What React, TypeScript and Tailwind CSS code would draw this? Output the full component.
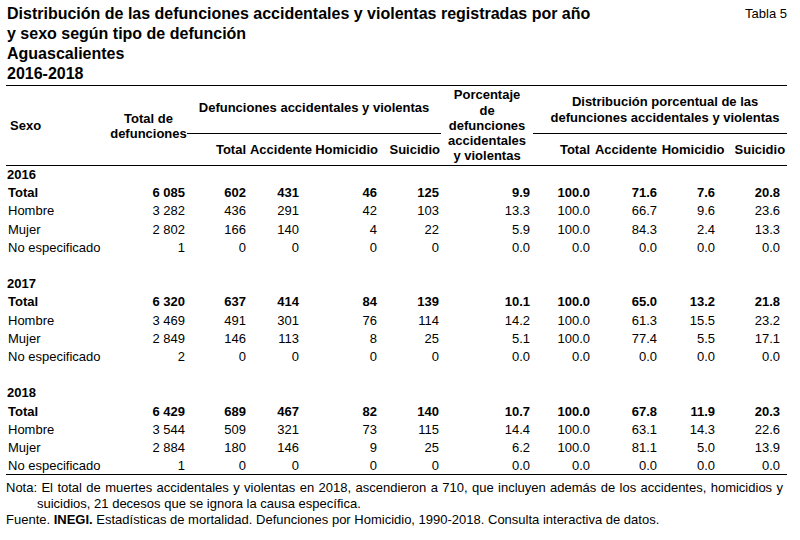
const rows: { year: string; data: [string, string[]][] }[] = [
  {
    year: "2016",
    data: [
      ["Total", ["6 085", "602", "431", "46", "125", "9.9", "100.0", "71.6", "7.6", "20.8"]],
      ["Hombre", ["3 282", "436", "291", "42", "103", "13.3", "100.0", "66.7", "9.6", "23.6"]],
      ["Mujer", ["2 802", "166", "140", "4", "22", "5.9", "100.0", "84.3", "2.4", "13.3"]],
      ["No especificado", ["1", "0", "0", "0", "0", "0.0", "0.0", "0.0", "0.0", "0.0"]],
    ],
  },
  {
    year: "2017",
    data: [
      ["Total", ["6 320", "637", "414", "84", "139", "10.1", "100.0", "65.0", "13.2", "21.8"]],
      ["Hombre", ["3 469", "491", "301", "76", "114", "14.2", "100.0", "61.3", "15.5", "23.2"]],
      ["Mujer", ["2 849", "146", "113", "8", "25", "5.1", "100.0", "77.4", "5.5", "17.1"]],
      ["No especificado", ["2", "0", "0", "0", "0", "0.0", "0.0", "0.0", "0.0", "0.0"]],
    ],
  },
  {
    year: "2018",
    data: [
      ["Total", ["6 429", "689", "467", "82", "140", "10.7", "100.0", "67.8", "11.9", "20.3"]],
      ["Hombre", ["3 544", "509", "321", "73", "115", "14.4", "100.0", "63.1", "14.3", "22.6"]],
      ["Mujer", ["2 884", "180", "146", "9", "25", "6.2", "100.0", "81.1", "5.0", "13.9"]],
      ["No especificado", ["1", "0", "0", "0", "0", "0.0", "0.0", "0.0", "0.0", "0.0"]],
    ],
  },
]

// padding-right per value column, to line numbers up under the headers
const valuePad = ["pr-[2px]", "pr-[1px]", "pr-[16px]", "pr-[2px]", "pr-[2px]", "pr-[3px]", "pr-[2px]", "pr-[2px]", "pr-[12px]", "pr-[7px]"]

function YearBlock({ year, data, last }: { year: string; data: [string, string[]][]; last: boolean }) {
  return (
    <>
      <tr className="h-[18.2px]">
        <td className="pl-[1px] font-bold" colSpan={11}>
          {year}
        </td>
      </tr>
      {data.map(([label, values]) => (
        <tr key={label} className={`h-[18.2px] ${label === "Total" ? "font-bold" : ""}`}>
          <td className="pl-[2px] whitespace-nowrap">{label}</td>
          {values.map((v, i) => (
            <td key={i} className={`text-right ${valuePad[i]}`}>
              {v}
            </td>
          ))}
        </tr>
      ))}
      {!last && (
        <tr className="h-[18.2px]">
          <td colSpan={11}></td>
        </tr>
      )}
    </>
  )
}

export default function App() {
  return (
    <div className="w-[800px] h-[540px] bg-white text-black font-['Liberation_Sans',Arial,sans-serif] text-[13px] px-[6px] pt-[4px]">
      <div className="flex justify-between">
        <h1 className="font-bold text-[16px] leading-[20px] pl-[1px]">
          Distribución de las defunciones accidentales y violentas registradas por año
          <br />
          y sexo según tipo de defunción
          <br />
          Aguascalientes
          <br />
          2016-2018
        </h1>
        <span className="leading-[20px] pr-[7px]">Tabla 5</span>
      </div>

      <table className="mt-[1px] w-[781px] table-fixed border-collapse">
        <colgroup>
          <col className="w-[104px]" />
          <col className="w-[77px]" />
          <col className="w-[60px]" />
          <col className="w-[68px]" />
          <col className="w-[64px]" />
          <col className="w-[62px]" />
          <col className="w-[92px]" />
          <col className="w-[59px]" />
          <col className="w-[67px]" />
          <col className="w-[68px]" />
          <col className="w-[60px]" />
        </colgroup>
        <thead className="font-bold leading-[15.5px]">
          <tr className="h-[48px] border-t border-black">
            <th rowSpan={2} className="text-left pl-[4px] align-middle">
              Sexo
            </th>
            <th rowSpan={2} className="text-center align-middle whitespace-nowrap pt-[1px]">
              Total de
              <br />
              defunciones
            </th>
            <th colSpan={4} className="border-b border-black align-middle pb-[4px]">
              Defunciones accidentales y violentas
            </th>
            <th rowSpan={2} className="text-center align-middle leading-[15.2px]">
              Porcentaje
              <br />
              de
              <br />
              defunciones
              <br />
              accidentales
              <br />y violentas
            </th>
            <th colSpan={4} className="border-b border-black align-middle pl-[10px] whitespace-nowrap">
              Distribución porcentual de las
              <br />
              defunciones accidentales y violentas
            </th>
          </tr>
          <tr className="h-[32px] border-b border-black">
            <th className="text-right pr-[1px] pt-[1px]">Total</th>
            <th className="text-center pt-[1px]">Accidente</th>
            <th className="text-right pr-[1px] pt-[1px]">Homicidio</th>
            <th className="text-right pr-[1px] pt-[1px]">Suicidio</th>
            <th className="text-right pr-[2px] pt-[1px]">Total</th>
            <th className="text-right pr-[2px] pt-[1px]">Accidente</th>
            <th className="text-center pt-[1px]">Homicidio</th>
            <th className="text-right pr-[2px] pt-[1px]">Suicidio</th>
          </tr>
        </thead>
        <tbody className="leading-[15px] border-b border-black">
          {rows.map((r, i) => (
            <YearBlock key={r.year} year={r.year} data={r.data} last={i === rows.length - 1} />
          ))}
        </tbody>
      </table>

      <div className="mt-[5px] leading-[16px] w-[777px]">
        <p className="text-justify pl-[31px] -indent-[31px]">
          Nota: El total de muertes accidentales y violentas en 2018, ascendieron a 710, que incluyen además de los
          accidentes, homicidios y suicidios, 21 decesos que se ignora la causa específica.
        </p>
        <p>
          Fuente. <span className="font-bold">INEGI.</span> Estadísticas de mortalidad. Defunciones por Homicidio,
          1990-2018. Consulta interactiva de datos.
        </p>
      </div>
    </div>
  )
}
